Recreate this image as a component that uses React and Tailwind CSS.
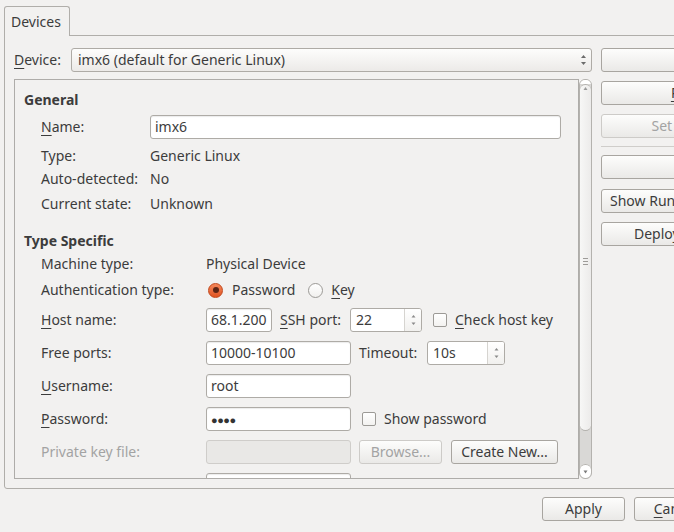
import React from "react";

const txt = "text-[#3c3c3c]";

function Btn({ children, className = "", disabled = false }) {
  return (
    <div
      className={`h-6 shrink-0 flex items-center justify-center px-[8px] whitespace-nowrap rounded-[3px] border bg-linear-to-b from-[#fdfdfc] to-[#eae9e7] ${
        disabled ? "border-[#cdcbc8] text-[#a3a3a3]" : "border-[#a8a5a0] text-[#3c3c3c]"
      } ${className}`}
    >
      {children}
    </div>
  );
}

function Input({ value, className = "", disabled = false }) {
  return (
    <div
      className={`h-6 shrink-0 flex items-center pl-[4px] rounded-[3px] border overflow-hidden whitespace-nowrap ${
        disabled ? "bg-[#e9e8e6] border-[#cfcdca]" : "bg-white border-[#aeaba6] shadow-[inset_0_1px_1px_rgba(0,0,0,0.08)]"
      } ${className}`}
    >
      {value}
    </div>
  );
}

function Arrows() {
  return (
    <svg width="7" height="14" viewBox="0 0 7 14">
      <path d="M3.5 2 L6 5 L1 5 Z" fill="#6b6b6b" />
      <path d="M3.5 12 L6 9 L1 9 Z" fill="#6b6b6b" />
    </svg>
  );
}

function Spin({ value, className = "" }) {
  return (
    <div className={`h-6 shrink-0 flex rounded-[3px] border border-[#aeaba6] bg-white overflow-hidden ${className}`}>
      <div className="flex-1 flex items-center pl-[5px]">{value}</div>
      <div className="w-[17px] border-l border-[#d6d4d0] flex items-center justify-center bg-linear-to-b from-white to-[#f1f0ee]">
        <svg width="7" height="16" viewBox="0 0 7 16">
          <path d="M3.5 3 L5.5 5.5 L1.5 5.5 Z" fill="#8a8a8a" />
          <path d="M3.5 13 L5.5 10.5 L1.5 10.5 Z" fill="#8a8a8a" />
        </svg>
      </div>
    </div>
  );
}

function Check({ label, className = "" }) {
  return (
    <div className={`flex items-center shrink-0 whitespace-nowrap ${className}`}>
      <div className="w-[14px] h-[14px] rounded-[2px] border border-[#9c9a96] bg-linear-to-b from-white to-[#f3f2f0]" />
      <span className="ml-[8px]">{label}</span>
    </div>
  );
}

function Radio({ checked }) {
  return checked ? (
    <div className="w-[15px] h-[15px] rounded-full border border-[#c2461a] bg-linear-to-b from-[#f4875a] to-[#e0531f] flex items-center justify-center">
      <div className="w-[6px] h-[6px] rounded-full bg-[#5c2414]" />
    </div>
  ) : (
    <div className="w-[15px] h-[15px] rounded-full border border-[#9c9a96] bg-linear-to-b from-white to-[#f1f0ee]" />
  );
}

function U({ children }) {
  return <span className="underline underline-offset-[3px] decoration-1">{children}</span>;
}

function GenRow({ label, children, className = "" }) {
  return (
    <div className={`flex items-center pl-[26px] whitespace-nowrap ${className}`}>
      <div className="w-[109px] shrink-0">{label}</div>
      {children}
    </div>
  );
}

function SpecRow({ label, children, className = "", muted = false }) {
  return (
    <div className={`h-6 flex items-center pl-[26px] whitespace-nowrap ${className}`}>
      <div className={`w-[165px] shrink-0 ${muted ? "text-[#a3a3a3]" : ""}`}>{label}</div>
      {children}
    </div>
  );
}

function ScrollBar() {
  return (
    <div className="w-[13px] shrink-0 flex flex-col rounded-[6px] border border-[#b4b2ae] bg-[#d9d8d6] overflow-hidden">
      <div className="h-[4px] bg-white" />
      <div className="h-[347px] rounded-[6px] border-y border-[#b4b2ae] bg-linear-to-r from-[#f7f7f6] to-[#ecebea] flex flex-col items-center">
        <svg width="7" height="8" viewBox="0 0 7 8">
          <path d="M3.5 2 L5.5 5 L1.5 5 Z" fill="#9a9a9a" />
        </svg>
        <div className="flex-1 flex flex-col justify-center gap-[2px]">
          <div className="w-[5px] h-px bg-[#9d9b98]" />
          <div className="w-[5px] h-px bg-[#9d9b98]" />
          <div className="w-[5px] h-px bg-[#9d9b98]" />
        </div>
      </div>
      <div className="flex-1" />
      <div className="h-[14px] rounded-[6px] border-t border-[#b4b2ae] bg-white flex items-center justify-center">
        <svg width="7" height="6" viewBox="0 0 7 6">
          <path d="M1.5 1.5 L5.5 1.5 L3.5 4.5 Z" fill="#7a7a7a" />
        </svg>
      </div>
    </div>
  );
}

export default function App() {
  return (
    <div className={`w-[674px] h-[532px] overflow-hidden bg-[#f2f1f0] ${txt} text-[14px] leading-none font-['Noto_Sans',sans-serif]`}>
      <div className="w-[815px] pt-[6px]">
        <div className="flex pl-[4px]">
          <div className="relative z-10 -mb-px h-[30px] w-[66px] flex items-center pl-[6px] rounded-t-[3px] border border-b-0 border-[#b0aeaa] bg-[#f2f1f0]">
            Devices
          </div>
        </div>
        <div className="mx-[4px] h-[454px] border border-[#b0aeaa] rounded-b-[3px] flex pl-[9px] pt-[12px] pb-[9px]">
          <div className="w-[578px] shrink-0 flex flex-col">
            <div className="h-6 flex items-center">
              <span className="w-[57px] shrink-0">
                <U>D</U>evice:
              </span>
              <div className="flex-1 h-6 flex items-center justify-between pl-[6px] pr-[4px] rounded-[3px] border border-[#aeaba6] bg-linear-to-b from-[#fdfdfc] to-[#eceae8]">
                <span>imx6 (default for Generic Linux)</span>
                <Arrows />
              </div>
            </div>
            <div className="mt-[7px] h-[400px] flex">
              <div className="flex-1 border border-[#aeaca9] overflow-hidden">
                <div className="pl-[9px] mt-[10px] h-5 flex items-center font-bold">General</div>
                <GenRow label={<><U>N</U>ame:</>} className="h-6 mt-[5px]">
                  <Input value="imx6" className="w-[411px]" />
                </GenRow>
                <GenRow label="Type:" className="h-6 mt-[5px]">Generic Linux</GenRow>
                <GenRow label="Auto-detected:" className="h-[22px]">No</GenRow>
                <GenRow label="Current state:" className="h-6 mt-[2px]">Unknown</GenRow>

                <div className="pl-[9px] mt-[15px] h-5 flex items-center font-bold">Type Specific</div>
                <SpecRow label="Machine type:" className="mt-[1px]">Physical Device</SpecRow>
                <SpecRow label="Authentication type:" className="mt-[2px]">
                  <div className="ml-[2px] flex items-center">
                    <Radio checked />
                    <span className="ml-[9px]">Password</span>
                    <div className="ml-[13px]"><Radio /></div>
                    <span className="ml-[8px]"><U>K</U>ey</span>
                  </div>
                </SpecRow>
                <SpecRow label={<><U>H</U>ost name:</>} className="mt-[6px]">
                  <Input value="68.1.200" className="w-[66px]" />
                  <span className="ml-[8px] w-[70px] shrink-0"><U>S</U>SH port:</span>
                  <Spin value="22" className="w-[72px]" />
                  <Check label={<><U>C</U>heck host key</>} className="ml-[11px]" />
                </SpecRow>
                <SpecRow label="Free ports:" className="mt-[9px]">
                  <Input value="10000-10100" className="w-[145px]" />
                  <span className="ml-[8px] w-[68px] shrink-0">Timeout:</span>
                  <Spin value="10s" className="w-[78px]" />
                </SpecRow>
                <SpecRow label={<><U>U</U>sername:</>} className="mt-[9px]">
                  <Input value="root" className="w-[145px]" />
                </SpecRow>
                <SpecRow label={<><U>P</U>assword:</>} className="mt-[9px]">
                  <Input value={<span className="text-[11px] tracking-[-0.5px] text-[#333]">●●●●</span>} className="w-[145px]" />
                  <Check label="Show password" className="ml-[11px]" />
                </SpecRow>
                <SpecRow label="Private key file:" muted className="mt-[9px]">
                  <Input value="" disabled className="w-[145px]" />
                  <Btn disabled className="ml-[8px] w-[83px]">Browse...</Btn>
                  <Btn className="ml-[9px] w-[107px]">Create New...</Btn>
                </SpecRow>
                <SpecRow label="" className="mt-[9px]">
                  <Input value="" className="w-[145px]" />
                </SpecRow>
              </div>
              <ScrollBar />
            </div>
          </div>
          <div className="ml-[9px] w-max shrink-0 flex flex-col">
            <Btn>Add...</Btn>
            <Btn className="mt-[9px]"><U>R</U>emove</Btn>
            <Btn disabled className="mt-[9px]">Set As Default</Btn>
            <div className="mt-[8px] h-px bg-[#cfcdca]" />
            <Btn className="mt-[8px]">Test</Btn>
            <Btn className="mt-[10px] justify-start">Show Running Processes...</Btn>
            <Btn className="mt-[9px]">Deploy Public Key...</Btn>
          </div>
        </div>
        <div className="mt-[8px] flex justify-end gap-[9px] pr-[6px]">
          <Btn className="w-[83px]">Apply</Btn>
          <Btn className="w-[83px]"><U>C</U>ancel</Btn>
          <Btn className="w-[83px]">OK</Btn>
        </div>
      </div>
    </div>
  );
}
